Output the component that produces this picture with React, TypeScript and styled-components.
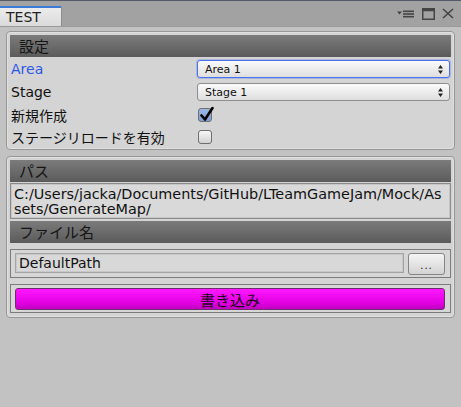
import React from "react";
import styled, { createGlobalStyle } from "styled-components";

const Global = createGlobalStyle`
  html, body { margin: 0; padding: 0; background: #c2c2c2; }
  #root { width: 461px; height: 407px; overflow: hidden; }
`;

const FONT = `"DejaVu Sans", "Noto Sans CJK JP", sans-serif`;

const Window = styled.div`
  width: 461px;
  height: 407px;
  display: flex;
  flex-direction: column;
  background: #c2c2c2;
  font-family: ${FONT};
  color: #111;
  border-top: 1px solid #535b69;
  box-sizing: border-box;
`;

const TabBar = styled.div`
  height: 25px;
  background: #a2a2a2;
  display: flex;
  align-items: flex-end;
  justify-content: space-between;
  border-bottom: 1px solid #9a9a9a;
`;

const Tab = styled.div`
  width: 62px;
  height: 20px;
  box-sizing: border-box;
  border-top: 2px solid #3d7ad8;
  border-right: 1px solid #8e8e8e;
  background: linear-gradient(#ececec, #dadada);
  font-size: 14px;
  line-height: 18px;
  padding-left: 6px;
  color: #222;
  border-top-right-radius: 2px;
`;

const Icons = styled.div`
  display: flex;
  align-items: center;
  gap: 7px;
  height: 25px;
  padding-right: 7px;
`;

const Content = styled.div`
  padding: 4px 6px 0 6px;
  display: flex;
  flex-direction: column;
  gap: 6px;
`;

const Panel = styled.div<{ $pb?: number }>`
  border: 1px solid #979797;
  border-radius: 4px;
  background: #d4d4d4;
  padding: 3px 3px ${(p) => p.$pb ?? 1}px 3px;
  box-shadow: inset 0 0 0 1px #e0e0e0;
`;

const Header = styled.div`
  height: 22px;
  background: linear-gradient(#7b7b7b, #5b5b5b);
  font-size: 15px;
  line-height: 22px;
  padding-left: 9px;
  color: #151515;
  font-family: "Noto Sans CJK JP", ${FONT};
`;

const Row = styled.div<{ $h: number; $mt?: number }>`
  display: grid;
  grid-template-columns: 187px 1fr;
  align-items: center;
  height: ${(p) => p.$h}px;
  margin-top: ${(p) => p.$mt ?? 0}px;
`;

const Label = styled.div<{ $active?: boolean }>`
  font-size: 14px;
  padding-left: 1px;
  color: ${(p) => (p.$active ? "#2c58e6" : "#111")};
`;

const Dropdown = styled.div<{ $focus?: boolean }>`
  height: 18px;
  box-sizing: border-box;
  margin-right: 1px;
  border: 1px solid ${(p) => (p.$focus ? "#4b72e6" : "#8e8e8e")};
  box-shadow: ${(p) => (p.$focus ? "0 0 0 1px rgba(90,130,240,0.35)" : "none")};
  border-radius: 3px;
  background: linear-gradient(#fbfbfb, #dedede);
  display: flex;
  align-items: center;
  justify-content: space-between;
  padding: 0 6px 0 7px;
  font-size: 11px;
  color: #111;
`;

const Arrows = styled.svg`
  width: 5px;
  height: 9px;
`;

const Check = styled.div<{ $on?: boolean }>`
  width: 14px;
  height: 14px;
  box-sizing: border-box;
  margin-left: 1px;
  border: 1px solid #6e6e6e;
  border-radius: 3px;
  background: ${(p) =>
    p.$on ? "linear-gradient(#9bb8e6, #7c9fd6)" : "linear-gradient(#f7f7f7, #d2d2d2)"};
  position: relative;
`;

const CheckMark = styled.svg`
  position: absolute;
  left: 0px;
  top: -3px;
  width: 15px;
  height: 16px;
`;

const PathBox = styled.div`
  margin-top: 1px;
  border: 1px solid #8a8a8a;
  background: #d9d9d9;
  box-shadow: inset 0 0 0 1px #c6c6c6;
  padding: 3px 3px 1px 3px;
  font-size: 14.4px;
  line-height: 15px;
  word-break: break-all;
  color: #111;
`;

const Header2 = styled(Header)`
  margin-top: 2px;
`;

const Box = styled.div<{ $mt: number }>`
  margin-top: ${(p) => p.$mt}px;
  border: 1px solid #7c7c7c;
  background: #d6d6d6;
  padding: 3px 5px 2px 4px;
  display: flex;
  align-items: center;
  gap: 4px;
`;

const TextField = styled.div`
  flex: 1;
  height: 20px;
  box-sizing: border-box;
  border: 1px solid #a3a3a3;
  box-shadow: inset 0 0 0 1px #c8c8c8;
  background: #d8d8d8;
  font-size: 14px;
  line-height: 18px;
  padding-left: 3px;
  margin-bottom: 2px;
`;

const SmallButton = styled.div`
  width: 37px;
  height: 22px;
  box-sizing: border-box;
  border: 1px solid #858585;
  border-radius: 3px;
  background: linear-gradient(#f4f4f4, #d3d3d3);
  font-size: 10px;
  display: flex;
  align-items: flex-end;
  justify-content: center;
  padding-bottom: 3px;
  letter-spacing: 1px;
`;

const BigButton = styled.div`
  flex: 1;
  height: 22px;
  box-sizing: border-box;
  border: 1px solid #6f2d6f;
  border-radius: 3px;
  background: linear-gradient(#ff18ff, #e000e0 70%, #c200c2);
  font-family: "Noto Sans CJK JP", ${FONT};
  font-size: 15px;
  display: flex;
  align-items: center;
  justify-content: center;
  color: #1a001a;
`;

const UpDown = () => (
  <Arrows viewBox="0 0 5 9">
    <path d="M2.5 0 L5 3.5 L0 3.5 Z M2.5 9 L5 5.5 L0 5.5 Z" fill="#222" />
  </Arrows>
);

export default function App() {
  return (
    <>
      <Global />
      <Window>
        <TabBar>
          <Tab>TEST</Tab>
          <Icons>
            <svg width="18" height="8" viewBox="0 0 18 8">
              <path d="M0 1.5 H5 L2.5 4.5 Z" fill="#444" />
              <rect x="6" y="0.5" width="11" height="1.6" fill="#444" />
              <rect x="6" y="3.2" width="11" height="1.6" fill="#444" />
              <rect x="6" y="5.9" width="11" height="1.6" fill="#444" />
            </svg>
            <svg width="13" height="12" viewBox="0 0 13 12">
              <rect x="0.75" y="0.75" width="11.5" height="10.5" fill="none" stroke="#444" strokeWidth="1.5" />
              <rect x="0.75" y="0.75" width="11.5" height="2.5" fill="#444" />
            </svg>
            <svg width="12" height="11" viewBox="0 0 12 11">
              <path d="M1 1 L11 10 M11 1 L1 10" stroke="#444" strokeWidth="1.6" />
            </svg>
          </Icons>
        </TabBar>
        <Content>
          <Panel $pb={1}>
            <Header>設定</Header>
            <Row $h={18} $mt={3}>
              <Label $active>Area</Label>
              <Dropdown $focus>
                <span>Area 1</span>
                <UpDown />
              </Dropdown>
            </Row>
            <Row $h={18} $mt={5}>
              <Label>Stage</Label>
              <Dropdown>
                <span>Stage 1</span>
                <UpDown />
              </Dropdown>
            </Row>
            <Row $h={22} $mt={3}>
              <Label>新規作成</Label>
              <Check $on>
                <CheckMark viewBox="0 0 15 16">
                  <path d="M2.5 9.5 L6 13.5 L13.5 2" fill="none" stroke="#000" strokeWidth="2.6" strokeLinecap="round" strokeLinejoin="round" />
                </CheckMark>
              </Check>
            </Row>
            <Row $h={22}>
              <Label>ステージリロードを有効</Label>
              <Check />
            </Row>
          </Panel>
          <Panel $pb={4}>
            <Header>パス</Header>
            <PathBox>C:/Users/jacka/Documents/GitHub/LTeamGameJam/Mock/Assets/GenerateMap/</PathBox>
            <Header2>ファイル名</Header2>
            <Box $mt={6}>
              <TextField>DefaultPath</TextField>
              <SmallButton>...</SmallButton>
            </Box>
            <Box $mt={6}>
              <BigButton>書き込み</BigButton>
            </Box>
          </Panel>
        </Content>
      </Window>
    </>
  );
}
